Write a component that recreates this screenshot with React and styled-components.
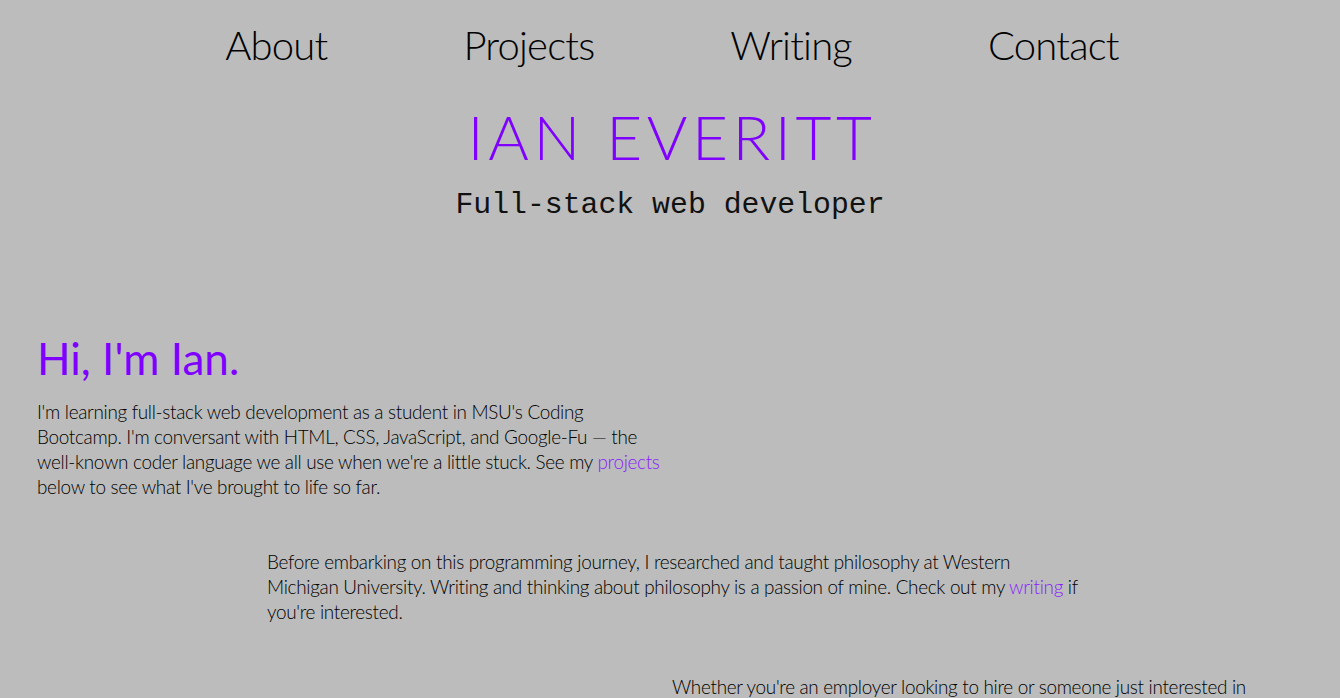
import React from "react";
import styled, { createGlobalStyle } from "styled-components";

const Global = createGlobalStyle`
  html, body { margin: 0; padding: 0; background: #bbbcbb; }
  body { font-family: "Lato", "Liberation Sans", sans-serif; font-weight: 300; color: #000; }
  * { box-sizing: border-box; }
`;

const Page = styled.div`
  min-height: 698px;
  background: #bbbcbb;
  overflow: hidden;
`;

const Nav = styled.nav`
  display: flex;
  justify-content: center;
  gap: 136px;
  padding-top: 21px;
  height: 79px;
  padding-left: 4px;
`;

const NavLink = styled.a`
  font-family: "Lato", sans-serif;
  font-weight: 300;
  font-size: 40px;
  line-height: 48px;
  color: #000;
  text-decoration: none;
  letter-spacing: -0.8px;
`;

const Header = styled.header`
  display: flex;
  flex-direction: column;
  align-items: center;
  padding-top: 24px;
`;

const Title = styled.h1`
  margin: 0;
  font-family: "Lato", sans-serif;
  font-weight: 300;
  font-size: 62px;
  line-height: 66px;
  letter-spacing: 4.6px;
  color: #7f00ff;
  padding-left: 4px;
`;

const Subtitle = styled.h2`
  margin: 19px 0 0;
  font-family: "Liberation Mono", monospace;
  font-weight: 400;
  font-size: 29.8px;
  line-height: 34px;
  color: #111;
`;

const Main = styled.main`
  display: flex;
  flex-direction: column;
  padding-top: 111px;
`;

const Section = styled.section`
  margin-left: ${(p) => p.$left}px;
  width: ${(p) => p.$width}px;
  margin-top: ${(p) => p.$top}px;
`;

const Heading = styled.h3`
  margin: 0 0 16px;
  font-family: "Lato", sans-serif;
  font-weight: 400;
  font-size: 44px;
  line-height: 50px;
  color: #7f00ff;
`;

const Para = styled.p`
  margin: 0;
  font-family: "Lato", sans-serif;
  font-weight: 300;
  font-size: 18.9px;
  line-height: 25px;
  color: #000;
  letter-spacing: -0.3px;
`;

const Link = styled.a`
  color: #8a1cff;
  text-decoration: none;
`;

export default function App() {
  return (
    <Page>
      <Global />
      <Nav>
        <NavLink href="#about">About</NavLink>
        <NavLink href="#projects">Projects</NavLink>
        <NavLink href="#writing">Writing</NavLink>
        <NavLink href="#contact">Contact</NavLink>
      </Nav>
      <Header>
        <Title>IAN EVERITT</Title>
        <Subtitle>Full-stack web developer</Subtitle>
      </Header>
      <Main>
        <Section $left={37} $width={630} $top={0}>
          <Heading>Hi, I'm Ian.</Heading>
          <Para>
            I'm learning full-stack web development as a student in MSU's Coding
            Bootcamp. I'm conversant with HTML, CSS, JavaScript, and Google-Fu — the
            well-known coder language we all use when we're a little stuck. See my{" "}
            <Link href="#projects">projects</Link> below to see what I've brought to
            life so far.
          </Para>
        </Section>
        <Section $left={267} $width={815} $top={50}>
          <Para>
            Before embarking on this programming journey, I researched and taught
            philosophy at Western Michigan University. Writing and thinking about
            philosophy is a passion of mine. Check out my{" "}
            <Link href="#writing">writing</Link> if you're interested.
          </Para>
        </Section>
        <Section $left={672} $width={620} $top={50}>
          <Para>
            Whether you're an employer looking to hire or someone just interested in
            chatting about web development, philosophy, or anything else, feel free
            to get in touch.
          </Para>
        </Section>
      </Main>
    </Page>
  );
}
